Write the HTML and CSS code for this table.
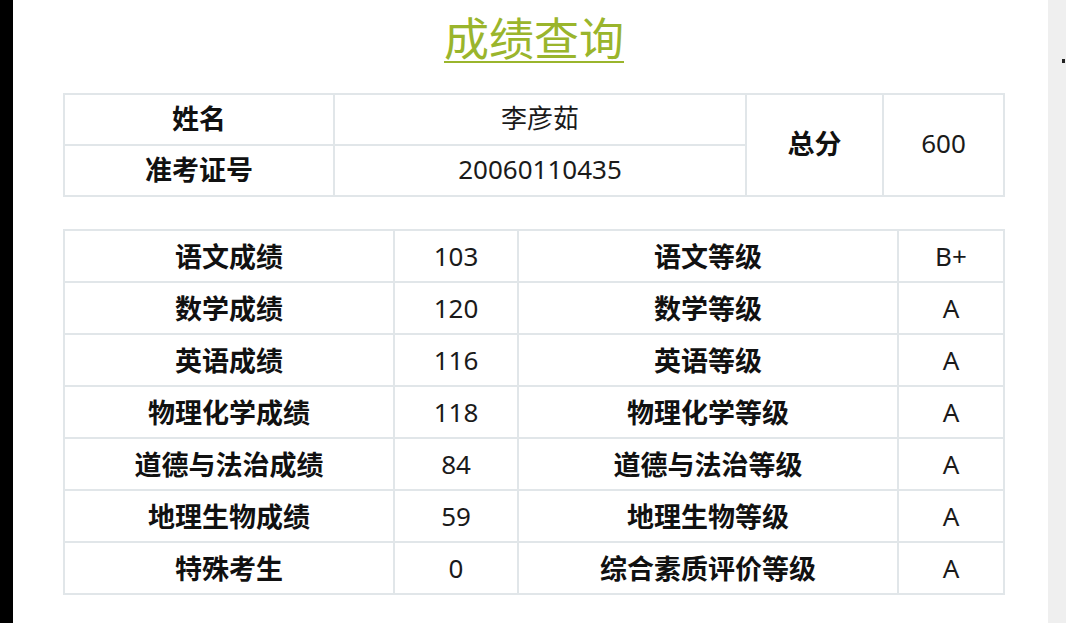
FILE: index.html
```html
<!DOCTYPE html>
<html lang="zh-CN">
<head>
<meta charset="utf-8">
<title>成绩查询</title>
<link rel="stylesheet" href="styles.css">
</head>
<body>
<div class="frame">
  <div class="edge-left"></div>
  <main class="main">
    <h1 class="title"><span>成绩查询</span></h1>
    <table class="grid info">
      <colgroup>
        <col class="c1"><col class="c2"><col class="c3"><col class="c4">
      </colgroup>
      <tr>
        <th>姓名</th>
        <td>李彦茹</td>
        <th rowspan="2">总分</th>
        <td rowspan="2">600</td>
      </tr>
      <tr>
        <th>准考证号</th>
        <td>20060110435</td>
      </tr>
    </table>
    <table class="grid scores">
      <colgroup>
        <col class="s1"><col class="s2"><col class="s3"><col class="s4">
      </colgroup>
      <tr><th>语文成绩</th><td>103</td><th>语文等级</th><td>B+</td></tr>
      <tr><th>数学成绩</th><td>120</td><th>数学等级</th><td>A</td></tr>
      <tr><th>英语成绩</th><td>116</td><th>英语等级</th><td>A</td></tr>
      <tr><th>物理化学成绩</th><td>118</td><th>物理化学等级</th><td>A</td></tr>
      <tr><th>道德与法治成绩</th><td>84</td><th>道德与法治等级</th><td>A</td></tr>
      <tr><th>地理生物成绩</th><td>59</td><th>地理生物等级</th><td>A</td></tr>
      <tr><th>特殊考生</th><td>0</td><th>综合素质评价等级</th><td>A</td></tr>
    </table>
  </main>
  <div class="edge-right"><span class="dot"></span></div>
</div>
</body>
</html>
```

FILE: styles.css
```css
* { box-sizing: border-box; }
html, body { margin: 0; padding: 0; background: #ffffff; }
body {
  font-family: "Noto Sans", "Noto Sans CJK SC", sans-serif;
  color: #151515;
}
.frame {
  display: flex;
  width: 1066px;
  height: 623px;
  overflow: hidden;
}
.edge-left {
  width: 13px;
  flex: none;
  background: #000;
}
.edge-right {
  width: 18px;
  flex: none;
  background: #efefef;
  position: relative;
}
.dot {
  position: absolute;
  left: 14px;
  top: 59px;
  width: 3px;
  height: 4px;
  background: #222;
}
.main {
  flex: 1;
  padding-left: 50px;
  background: #fff;
}
.title {
  width: 940px;
  margin: 0;
  padding-top: 5px;
  padding-left: 2px;
  height: 93px;
  text-align: center;
  font-family: "Noto Sans CJK SC", sans-serif;
  font-weight: 400;
  font-size: 45px;
  line-height: 64px;
  color: #9ab52c;
}
.title span {
  text-decoration: underline;
  text-decoration-thickness: 2px;
  text-underline-offset: 5px;
}
.grid {
  width: 940px;
  table-layout: fixed;
  border-collapse: collapse;
  font-size: 26px;
}
.grid th, .grid td {
  border: 2px solid #e1e6e9;
  text-align: center;
  vertical-align: middle;
  padding: 0;
  line-height: 30px;
}
.grid th {
  font-family: "Noto Sans CJK SC", sans-serif;
  font-weight: 700;
  font-size: 27px;
  color: #111;
}
.grid td {
  font-family: "Noto Sans", "Noto Sans CJK SC", sans-serif;
  font-weight: 400;
  color: #1a1a1a;
}
.info th, .info td { height: 51px; padding-bottom: 4px; }
.info .c1 { width: 270px; }
.info .c2 { width: 412px; }
.info .c3 { width: 137px; }
.info .c4 { width: 121px; }
.scores { margin-top: 32px; }
.scores th, .scores td { height: 52px; }
.scores .s1 { width: 330px; }
.scores .s2 { width: 124px; }
.scores .s3 { width: 380px; }
.scores .s4 { width: 106px; }
```
